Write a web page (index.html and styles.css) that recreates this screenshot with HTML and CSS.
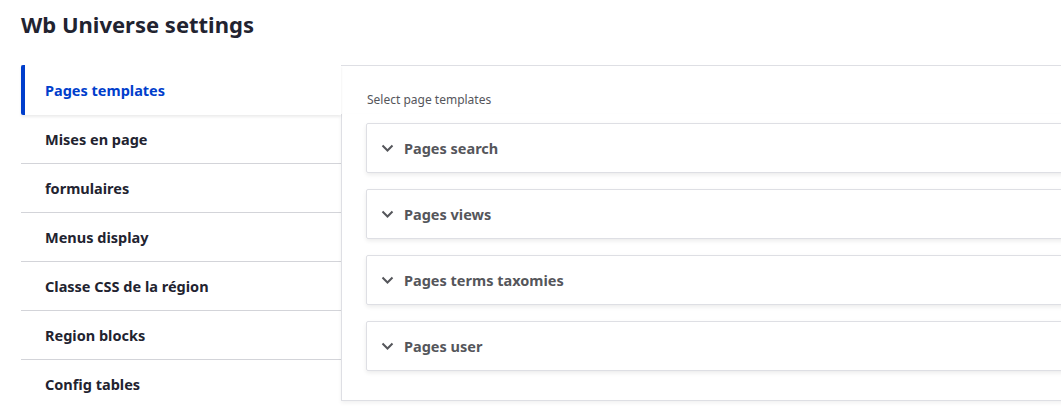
FILE: index.html
```html
<!DOCTYPE html>
<html lang="fr">
<head>
    <meta charset="UTF-8">
    <title>Wb Universe settings</title>
    <link rel="stylesheet" href="styles.css">
</head>
<body>
    <h1 class="page-title">Wb Universe settings</h1>

    <div class="vtabs">
        <!-- Menu des onglets -->
        <ul class="vtabs-menu">
            <li class="vtabs-item active"><a href="#">Pages templates</a></li>
            <li class="vtabs-item"><a href="#">Mises en page</a></li>
            <li class="vtabs-item"><a href="#">formulaires</a></li>
            <li class="vtabs-item"><a href="#">Menus display</a></li>
            <li class="vtabs-item"><a href="#">Classe CSS de la région</a></li>
            <li class="vtabs-item"><a href="#">Region blocks</a></li>
            <li class="vtabs-item"><a href="#">Config tables</a></li>
        </ul>

        <!-- Contenu -->
        <div class="vtabs-panes">
            <div class="pane">
                <p class="pane-desc">Select page templates</p>
                <details class="box"><summary><svg class="chev" width="13" height="8" viewBox="0 0 13 8"><path d="M1.5 1.5 L6.5 6.5 L11.5 1.5" fill="none" stroke="#55565b" stroke-width="2"/></svg>Pages search</summary></details>
                <details class="box"><summary><svg class="chev" width="13" height="8" viewBox="0 0 13 8"><path d="M1.5 1.5 L6.5 6.5 L11.5 1.5" fill="none" stroke="#55565b" stroke-width="2"/></svg>Pages views</summary></details>
                <details class="box"><summary><svg class="chev" width="13" height="8" viewBox="0 0 13 8"><path d="M1.5 1.5 L6.5 6.5 L11.5 1.5" fill="none" stroke="#55565b" stroke-width="2"/></svg>Pages terms taxomies</summary></details>
                <details class="box"><summary><svg class="chev" width="13" height="8" viewBox="0 0 13 8"><path d="M1.5 1.5 L6.5 6.5 L11.5 1.5" fill="none" stroke="#55565b" stroke-width="2"/></svg>Pages user</summary></details>
            </div>
        </div>
    </div>
</body>
</html>
```

FILE: styles.css
```css
body {
    margin: 0;
    padding: 0 0 0 21px;
    font-family: "Noto Sans", sans-serif;
    color: #222330;
    background: #fff;
    overflow: hidden;
}
.page-title {
    margin: 0;
    padding-top: 8px;
    height: 57px;
    font-size: 22px;
    font-weight: 700;
    line-height: 32px;
}
.vtabs {
    display: flex;
    align-items: flex-start;
    width: 1100px;
    border-top: 1px solid #dedfe4;
}
.vtabs-menu {
    list-style: none;
    margin: 0;
    padding: 0;
    width: 320px;
    flex-shrink: 0;
}
.vtabs-item {
    height: 48px;
    border-bottom: 1px solid #d3d4d9;
    display: flex;
    align-items: center;
}
.vtabs-item:last-child {
    border-bottom: none;
}
.vtabs-item a {
    padding-left: 24px;
    color: #222330;
    font-size: 14.5px;
    font-weight: 700;
    text-decoration: none;
}
.vtabs-item.active {
    border-left: 4px solid #003ecc;
    border-bottom: none;
    border-radius: 2px 0 0 2px;
    margin-top: -1px;
    height: 50px;
    position: relative;
    z-index: 1;
    background: #fff;
    box-shadow: 0 2px 3px rgba(0, 0, 0, 0.08);
}
.vtabs-item.active a {
    padding-left: 20px;
    color: #003ecc;
}
.vtabs-panes {
    flex: 1;
    margin-top: 48px;
    border-left: 1px solid #dedfe4;
    border-bottom: 1px solid #dedfe4;
    box-shadow: 0 2px 4px rgba(0, 0, 0, 0.06);
}
.pane {
    margin-top: -48px;
    padding: 25px 0 29px 24px;
}
.pane-desc {
    margin: 0 0 14px 1px;
    font-size: 12px;
    line-height: 18px;
    color: #55565b;
}
.box {
    height: 48px;
    border: 1px solid #dedfe4;
    border-radius: 2px;
    margin-bottom: 16px;
    box-shadow: 0 2px 4px rgba(0, 0, 0, 0.08);
}
.box:last-child {
    margin-bottom: 0;
}
.box summary {
    list-style: none;
    height: 48px;
    display: flex;
    align-items: center;
    padding-left: 14px;
    font-size: 14.5px;
    font-weight: 700;
    color: #55565b;
}
.box summary::-webkit-details-marker {
    display: none;
}
.chev {
    margin-right: 10px;
}
```
